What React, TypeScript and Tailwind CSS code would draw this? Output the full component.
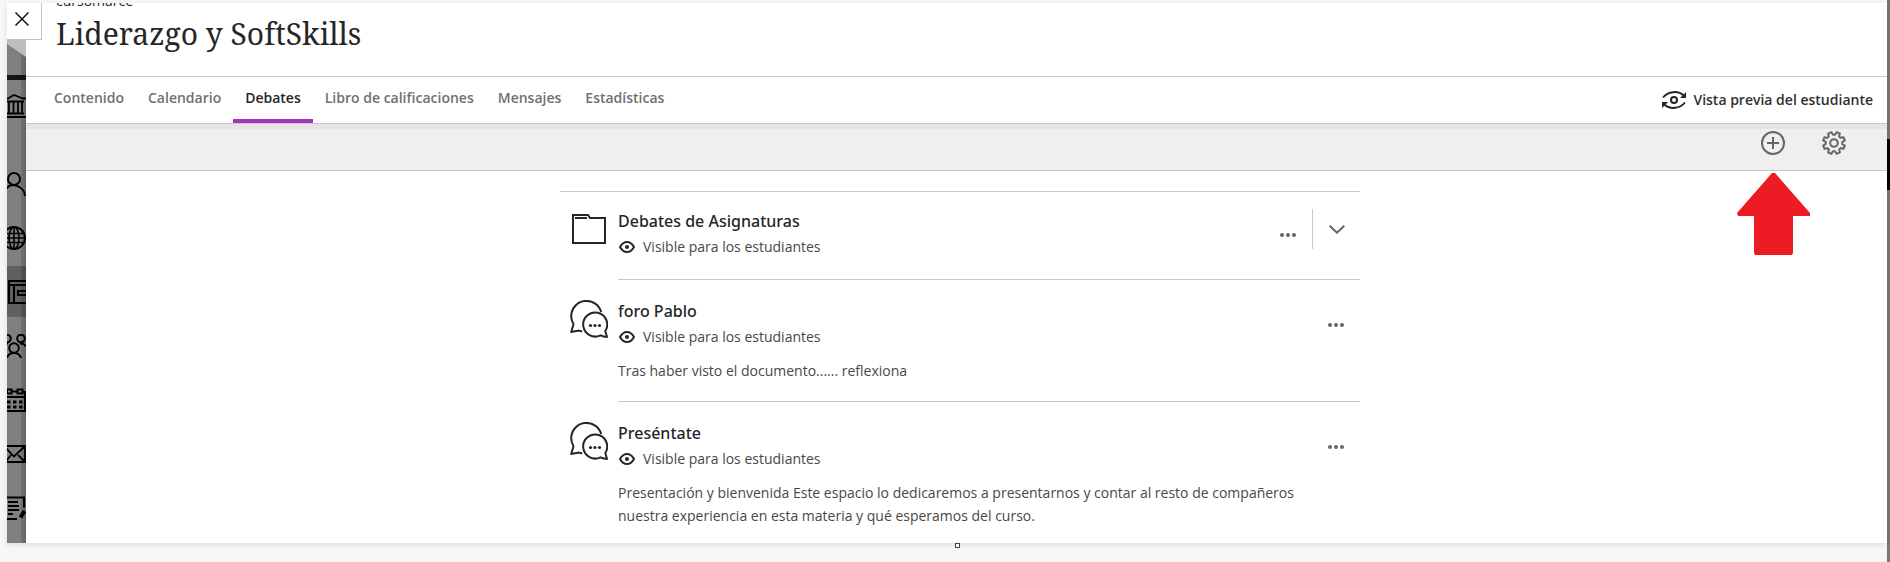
import type { ReactNode } from "react";

const TABS = ["Contenido", "Calendario", "Debates", "Libro de calificaciones", "Mensajes", "Estadísticas"];

interface Discussion {
  title: string;
  kind: "folder" | "forum";
  description?: string;
}

const DISCUSSIONS: Discussion[] = [
  { title: "Debates de Asignaturas", kind: "folder" },
  { title: "foro Pablo", kind: "forum", description: "Tras haber visto el documento...... reflexiona" },
  {
    title: "Preséntate",
    kind: "forum",
    description:
      "Presentación y bienvenida Este espacio lo dedicaremos a presentarnos y contar al resto de compañeros nuestra experiencia en esta materia y qué esperamos del curso.",
  },
];

function RailIcon({ children }: { children: ReactNode }) {
  return (
    <svg className="block h-6 w-[19px]" viewBox="0 0 19 24" fill="none" stroke="#000" strokeWidth="2" aria-hidden="true">
      {children}
    </svg>
  );
}

interface RailLinkProps {
  label: string;
  active?: boolean;
  children: ReactNode;
}

function RailLink({ label, active, children }: RailLinkProps) {
  return (
    <a
      href="#"
      aria-label={label}
      className={active ? "flex h-[51px] items-center bg-black/25" : "flex h-[51px] items-center"}
    >
      <RailIcon>{children}</RailIcon>
    </a>
  );
}

/* Main navigation, mostly hidden behind the course panel */
function Rail() {
  return (
    <nav className="w-[19px] shrink-0 overflow-hidden bg-[linear-gradient(to_right,#808080_14px,#707070_14px,#6a6a6a_18px,#585858_19px)]">
      <svg className="mt-[37px] block h-[35px] w-[19px]" viewBox="0 0 19 35" aria-hidden="true">
        <path d="M0 0H19V17L0 4Z" fill="#bdbdbd" />
      </svg>
      <div className="h-[5px] bg-[#141414]" />
      <div className="flex flex-col gap-[3px]">
        <div className="mb-6">
          <RailLink label="Institución">
            <path d="M0 5 7 1l9 3.500h3M0 7.500h17M0 19.500h17M0 23h19M2 8v11M6.500 8v11M11 8v11M15 8v11" strokeWidth="1.800" />
          </RailLink>
        </div>
        <RailLink label="Perfil">
          <circle cx="7" cy="7" r="6" />
          <path d="M-1 17C2 13 6 12.500 9 13.500C14 15 18 19 18 24" />
        </RailLink>
        <RailLink label="Actividad">
          <circle cx="7" cy="12" r="11" />
          <ellipse cx="7" cy="12" rx="5" ry="11" strokeWidth="1.600" />
          <path d="M7 1v22M-2 7.500h19M-4 12h22M-2 16.500h19" strokeWidth="1.600" />
        </RailLink>
        <RailLink label="Cursos" active>
          <path d="M20 1H2v22h18M2 5h18M7 5v18M20 11h-9v4h9" />
        </RailLink>
        <RailLink label="Grupos">
          <circle cx="7" cy="14" r="4.800" />
          <circle cx="0" cy="4.500" r="3.800" />
          <circle cx="14" cy="4.500" r="3.800" />
          <path d="M0 24c1-4 4-5 7-5s6 1 7 5M13 9.500c3 0 5 1 6 3M1 9.500c-1 0-2 0-3 1" />
        </RailLink>
        <RailLink label="Calendario">
          <path d="M-4 4h4M5 3.500h5M15 4h3v19H-4M0 9h18" />
          <path d="M0 1.500h4.500v4H0zM10.500 1.500h5v4h-5z" />
          <path d="M0 14h16M0 19h16" strokeWidth="3" strokeDasharray="3.500 2.500" />
        </RailLink>
        <RailLink label="Mensajes">
          <path d="M-4 4h22v16H-4zM-2 5l9 9.500L17 5M-1 19l5-6M17 19l-6-6" strokeWidth="1.800" />
        </RailLink>
        <RailLink label="Calificaciones">
          <path d="M-4 1.500h21v10M-4 23h14M1 6h10M1 10h11M1 14h11M1 18h5" />
          <path d="M13.500 21.500 17.500 15" strokeWidth="4" />
        </RailLink>
      </div>
    </nav>
  );
}

function FolderIcon() {
  return (
    <svg className="ml-3 mt-[22px] block h-[30px] w-[34px]" viewBox="0 0 34 30" fill="none" stroke="#262626" strokeWidth="2" aria-hidden="true">
      <path d="M1 1h15l2 3h15v25H1z" />
      <path d="M3 4h12" strokeWidth="2" />
    </svg>
  );
}

function ForumIcon() {
  return (
    <svg className="ml-[10px] mt-5 block h-[38px] w-[38px]" viewBox="0 0 38 38" fill="none" stroke="#262626" strokeWidth="2" strokeLinejoin="round" aria-hidden="true">
      <path d="M31.200 12A15.300 15.300 0 0 0 1.200 16.300c0 3 .9 5.500 2.300 8L1.200 32c3-.3 5.600-1 8-1.400l3 .9" />
      <path d="M35.300 31a12 12 0 1 0-4.800 4.300c2 .9 4 1.500 6.500 1.700z" />
      <g fill="#262626" stroke="none">
        <circle cx="20.500" cy="25.500" r="1.600" />
        <circle cx="25" cy="25.500" r="1.600" />
        <circle cx="29.500" cy="25.500" r="1.600" />
      </g>
    </svg>
  );
}

function EyeIcon() {
  return (
    <svg className="h-3 w-4" viewBox="0 0 16 12" fill="none" stroke="#262626" strokeWidth="2" aria-hidden="true">
      <path d="M1 6C3 2.500 5.300 1 8 1s5 1.500 7 5c-2 3.500-4.300 5-7 5S3 9.500 1 6Z" />
      <circle cx="8" cy="6" r="2" fill="#262626" stroke="none" />
    </svg>
  );
}

function PreviewIcon() {
  return (
    <svg className="h-[18px] w-6" viewBox="0 0 24 18" fill="none" stroke="#262626" strokeWidth="2" aria-hidden="true">
      <path d="M1 6.500C6 .2 16-.8 21.500 4.500M23 11.500C18 17.800 8 18.800 2.500 13.500" />
      <path d="M24 1v6h-6zM0 17v-6h6z" fill="#262626" stroke="none" />
      <circle cx="12" cy="9" r="3" />
    </svg>
  );
}

function GearIcon() {
  return (
    <svg className="block size-6" viewBox="0 0 24 24" fill="none" stroke="#666" strokeWidth="2" strokeLinejoin="round" aria-hidden="true">
      <path
        transform="rotate(22.500 12 12)"
        d="M10.300 1h3.400l.5 3 1.800.7 2.500-1.700 2.500 2.500-1.700 2.500.7 1.800 3 .5v3.400l-3 .5-.7 1.800 1.700 2.500-2.500 2.500-2.500-1.700-1.800.7-.5 3h-3.400l-.5-3-1.800-.7-2.500 1.700-2.500-2.500 1.700-2.500-.7-1.800-3-.5v-3.400l3-.5.7-1.800-1.700-2.500 2.500-2.500 2.500 1.700 1.800-.7z"
      />
      <circle cx="12" cy="12" r="3.800" />
    </svg>
  );
}

function MoreButton({ title }: { title: string }) {
  return (
    <button type="button" aria-label={`Más opciones para ${title}`} className="flex h-6 w-12 items-center justify-center">
      <svg className="h-1 w-4" viewBox="0 0 16 4" fill="#666" aria-hidden="true">
        <circle cx="2" cy="2" r="2" />
        <circle cx="8" cy="2" r="2" />
        <circle cx="14" cy="2" r="2" />
      </svg>
    </button>
  );
}

function DiscussionRow({ title, kind, description }: Discussion) {
  const folder = kind === "folder";
  return (
    <li className="group flex">
      <div className="w-[58px] shrink-0">{folder ? <FolderIcon /> : <ForumIcon />}</div>
      <div
        className={`flex flex-1 border-b border-[#c8c8c8] group-last:border-b-0 group-last:pb-4 ${folder ? "pb-[18px] pt-[17px]" : "py-[19px]"}`}
      >
        <div className="min-w-0 flex-1">
          <h2 className="font-['Noto_Sans',sans-serif] text-base font-medium leading-6 text-[#262626]">{title}</h2>
          <div className="flex h-7 items-center gap-2 pl-px">
            <EyeIcon />
            <span>Visible para los estudiantes</span>
          </div>
          {description && <p className="mt-2 leading-[23px]">{description}</p>}
        </div>
        <div className="flex shrink-0 items-start">
          <div className="mt-[14px]">
            <MoreButton title={title} />
          </div>
          {folder && (
            <button type="button" aria-label={`Expandir ${title}`} className="flex h-10 w-12 items-center justify-center border-l border-[#c8c8c8]">
              <svg className="h-[9px] w-4" viewBox="0 0 16 9" fill="none" stroke="#666" strokeWidth="2" aria-hidden="true">
                <path d="m.7.700 7.300 7 7.300-7" />
              </svg>
            </button>
          )}
        </div>
      </div>
    </li>
  );
}

export default function App() {
  return (
    <div className="flex min-h-screen bg-[#f7f7f7] font-['Open_Sans','Noto_Sans',sans-serif] text-sm text-[#484848]">
      <div className="min-w-0 flex-1 pl-[7px] pt-[3px]">
        <div className="relative flex shadow-[0_2px_6px_rgba(0,0,0,0.1)]">
          <Rail />
          <button
            type="button"
            aria-label="Cerrar"
            className="absolute left-0 top-0 flex h-[37px] w-[35px] items-center justify-center border-b border-r border-[#c4c4c4] bg-white pb-1 pr-1"
          >
            <svg className="size-[14px]" viewBox="0 0 14 14" stroke="#111" strokeWidth="1.500" aria-hidden="true">
              <path d="m.5.500 13 13M13.500.500l-13 13" />
            </svg>
          </button>

          <main className="min-w-0 flex-1 bg-white">
            <header className="h-[74px] overflow-hidden border-b border-[#c8c8c8] pl-[30px] text-[#262626]">
              <p className="-mt-3 leading-5">cursomarce</p>
              <h1 className="mt-[3px] font-['Noto_Serif','DejaVu_Serif',serif] text-[30px] font-normal leading-10">
                Liderazgo y SoftSkills
              </h1>
            </header>

            <div className="flex h-[47px] items-center justify-between border-b border-[#c8c8c8] pl-4 pr-[14px]">
              <nav className="flex h-full">
                {TABS.map((tab) => (
                  <a
                    key={tab}
                    href="#"
                    className={
                      tab === "Debates"
                        ? "border-b-4 border-[#a234b5] px-3 pt-[9px] font-semibold leading-6 text-[#262626]"
                        : "px-3 pt-[9px] font-semibold leading-6 text-[#707070]"
                    }
                  >
                    {tab}
                  </a>
                ))}
              </nav>
              <button type="button" className="flex items-center gap-[7px] font-semibold text-[#303030]">
                <PreviewIcon />
                Vista previa del estudiante
              </button>
            </div>

            <div className="flex h-[47px] items-start justify-end gap-[37px] border-b border-t-[5px] border-b-[#c8c8c8] border-t-[#e5e5e5] bg-[#efefef] pr-[41px] pt-[2px]">
              <div className="relative">
                <button type="button" aria-label="Añadir debate" className="block">
                  <svg className="block size-6" viewBox="0 0 24 24" fill="none" stroke="#666" strokeWidth="2" aria-hidden="true">
                    <circle cx="12" cy="12" r="11" />
                    <path d="M12 6v12M6 12h12" />
                  </svg>
                </button>
                {/* Arrow pointing at the add button */}
                <svg className="absolute -left-6 top-[42px] h-[82px] w-[73px]" viewBox="0 0 73 82" fill="#ed1c24" aria-hidden="true">
                  <path d="M35 0h3l35 40v3H56v37l-1 2H18l-1-2V43H1l-1-3z" />
                </svg>
              </div>
              <button type="button" aria-label="Configuración">
                <GearIcon />
              </button>
            </div>

            <div className="pl-[7px] pt-5">
              <ul className="mx-auto max-w-[800px] border-t border-[#c8c8c8]">
                {DISCUSSIONS.map((item) => (
                  <DiscussionRow key={item.title} {...item} />
                ))}
              </ul>
            </div>
          </main>
          <span className="absolute left-[948px] top-full size-[5px] border border-[#444] bg-white" />
        </div>
      </div>

      {/* Scrollbar */}
      <div className="w-[3px] shrink-0 bg-[#777] pt-[139px]">
        <div className="h-[51px] bg-black" />
      </div>
    </div>
  );
}
